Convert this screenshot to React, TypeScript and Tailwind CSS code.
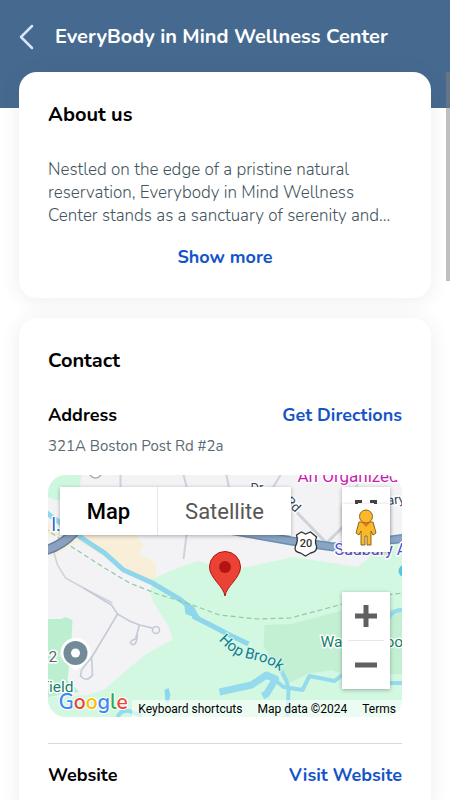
import type { ReactNode } from "react";

function Card({ title, children }: { title: string; children: ReactNode }) {
  return (
    <section className="rounded-[18px] bg-white px-[29px] pt-7 pb-6 shadow-[0_2px_20px_rgba(40,50,90,0.09)]">
      <h2 className="text-xl leading-[30px] font-bold text-black">{title}</h2>
      {children}
    </section>
  );
}

function MapDrawing() {
  return (
    <svg
      viewBox="0 0 355 242"
      preserveAspectRatio="xMidYMid slice"
      className="absolute inset-0 h-full w-full"
      fontFamily="Roboto, sans-serif"
      aria-hidden="true"
    >
      <rect width="355" height="242" fill="#f3f2f4" />
      <path d="M0 0H34L31 19L22 29L0 22Z" fill="#cef7df" />
      <path d="M0 77L23 59L87 59L96 70L91 78L108 88L109 101L105 107L72 91L30 66L5 82Z" fill="#f9eed8" />
      <path d="M0 46V60L18 61Z" fill="#f9eed8" />
      <path
        d="M105 104L125 95L150 86L176 93L200 92L246 82L310 92L334 73L355 65V242H0V222L40 220L56 215L85 190L100 178L125 165L121 151L105 126L103 115Z"
        fill="#d2f8e1"
      />
      <path d="M0 144L14 144L18 142L25 145L24 165L20 205L32 217L0 222Z" fill="#bcefd0" />
      <path d="M217 150L244 149L274 141L300 134H355V199H295L284 195L260 199L242 208L230 196L216 170Z" fill="#c3f0d3" />
      <g fill="none" stroke="#cdd3da" strokeWidth="2">
        <path d="M73 0V22M136 0L140 15L139 60L136 84M179 0L183 20M233 0L218 25M310 9L304 24" />
        <path d="M248 36L279 68L320 28" strokeWidth="3" />
        <path d="M6 76L10 90L18 103L36 113L65 128" strokeWidth="1.5" />
      </g>
      <g fill="none" stroke="#c4cbd8" strokeWidth="1.6">
        <path d="M36 113L64 130L70 139L82 146L92 150L105 153M70 139L60 156L45 181L34 195L33 201Q39 208 45 200L44 181M92 150L88 164Q82 166 83 168Q87 172 89 166L90 160" />
        <circle cx="108.500" cy="155" r="3.500" />
      </g>
      <circle cx="48" cy="-3" r="6" fill="#fff" stroke="#a9adb2" strokeWidth="1.5" />
      <path d="M-2 37L28 59L57 78L76 95L105 108L132 124L145 134L147 142L165 151L180 159L201 169" fill="none" stroke="#8ed6ec" strokeWidth="5" />
      <path d="M136 127L146 132L151 140L159 150L149 143L138 139L137 132Z" fill="#8ed6ec" />
      <g fill="none" stroke="#96dbed" strokeWidth="4" strokeLinejoin="round">
        <path d="M234 196L239 206L241 214L240 242M217 202L225 203L236 212L255 215L262 201L287 206L296 199L310 193M336 156Q341 134 355 135M342 208H355M70 242Q75 232 87 238L94 241" />
        <path d="M172 217L204 210L219 200L228 204L219 219L215 221" strokeWidth="7" />
      </g>
      <path d="M118 227L117 215L121 213L123 220L121 228Z" fill="#8ed6ec" />
      <path d="M-3 53L23 71L57 93L82 108L110 119L145 130L172 140L210 144L243 143L288 131L320 122L355 118" fill="none" stroke="#8fc9a6" strokeWidth="1.2" strokeDasharray="5 3" />
      <path d="M-5 76Q13 72 27 57" fill="none" stroke="#657f9f" strokeWidth="10" />
      <path d="M-5 76Q13 72 27 57" fill="none" stroke="#8aa1bf" strokeWidth="7" />
      <path d="M170 53L210 60L244 66L286 72L320 68L358 63" fill="none" stroke="#6f8daf" strokeWidth="9" />
      <path d="M170 53L210 60L244 66L286 72L320 68L358 63" fill="none" stroke="#88a5c5" strokeWidth="6" />
      <path d="M249 60L254 57L258 59L263 57L269 62Q267 67 269 71Q270 77 263 78L258 81L253 78Q246 77 248 71Q251 66 249 60Z" fill="#fff" stroke="#333" strokeWidth="1.300" />
      <text x="258.500" y="72" textAnchor="middle" fontSize="11" fontWeight="500" fill="#333">20</text>
      <circle cx="357" cy="96" r="6" fill="#55c4e5" />
      <g fontSize="15.500" stroke="#fff" strokeWidth="3" strokeLinejoin="round" paintOrder="stroke">
        <text x="250" y="7" fontSize="17" fill="#c81eb0">An Organized</text>
        <text x="203" y="17" fontSize="13" fill="#30435f">Dr</text>
        <text x="237" y="27" fontSize="13" fill="#30435f" transform="rotate(45 237 27)">Rd</text>
        <text x="340" y="30" fontSize="13" fill="#30435f" transform="rotate(-6 340 30)">ary</text>
        <text x="287" y="80" fontSize="16" fill="#5452cb">Sudbury A</text>
        <text x="273" y="172" fill="#148167">Wa</text>
        <text x="338" y="172" fill="#148167">oo</text>
        <text x="1" y="187" fill="#566675">2</text>
        <text x="-7" y="217" fill="#148167">Field</text>
        <text x="4" y="56" fontSize="18" fill="#1769cf">l.</text>
      </g>
      <path id="brook" d="M171 165Q180 175 191 181Q202 184 212 186Q224 189 240 202" fill="none" />
      <text fontSize="15" fill="#137b98" stroke="#d2f8e1" strokeWidth="2" paintOrder="stroke">
        <textPath href="#brook">Hop Brook</textPath>
      </text>
      <path d="M28 196L17 187Q12 181 13 178A15 15 0 0 1 43 178Q43 183 39 187Z" fill="#fff" />
      <circle cx="28" cy="178" r="12" fill="#738b99" />
      <circle cx="28" cy="178" r="4.500" fill="#fff" />
      <path d="M177.500 121C176 111 162 103 162 92A15.500 15.500 0 0 1 193 92C193 103 179 111 177.500 121Z" fill="#ea4335" stroke="#b31412" />
      <circle cx="177.500" cy="92" r="6" fill="#b31412" />
      <text x="11" y="234" fontSize="21" fontFamily="Nunito, Lato, sans-serif" fontWeight="600" stroke="#fff" strokeWidth="2" paintOrder="stroke">
        <tspan fill="#4285f4">G</tspan><tspan fill="#ea4335">o</tspan><tspan fill="#fbbc05">o</tspan><tspan fill="#4285f4">g</tspan><tspan fill="#34a853">l</tspan><tspan fill="#ea4335">e</tspan>
      </text>
    </svg>
  );
}

function Pegman() {
  return (
    <svg viewBox="0 0 22 38" className="h-[38px] w-[22px]" aria-hidden="true">
      <path d="M4 13H18L21 24L18 26L16 22V36H12V27H10V36H6V22L4 26L1 24Z" fill="#fbb829" stroke="#8b651c" strokeLinejoin="round" />
      <path d="M6 13H16L11 18Z" fill="#e37d24" />
      <circle cx="11" cy="7.500" r="6.500" fill="#fbb829" stroke="#8b651c" />
    </svg>
  );
}

function LocationMap() {
  return (
    <div className="relative h-[242px] overflow-hidden rounded-[18px]" aria-label="Map">
      <MapDrawing />
      <div className="absolute top-3 left-3 flex h-12 bg-white font-[Roboto,sans-serif] text-[22px] text-black shadow-[0_1px_4px_rgba(0,0,0,0.3)]">
        <button className="w-[98px] border-r border-gray-200 font-medium">Map</button>
        <button className="w-[133px] text-[#565656]">Satellite</button>
      </div>
      <button aria-label="Toggle fullscreen" className="absolute top-3 right-3 flex h-12 w-12 items-center justify-center bg-white shadow-[0_1px_4px_rgba(0,0,0,0.3)]">
        <svg viewBox="0 0 22 22" className="h-[22px] w-[22px]" fill="none" stroke="#444" strokeWidth="3" aria-hidden="true">
          <path d="M1.500 7V1.500H7M15 1.500H20.500V7M20.500 15V20.500H15M7 20.500H1.500V15" />
        </svg>
      </button>
      <button aria-label="Street View" className="absolute top-[29px] right-3 flex h-12 w-12 items-center justify-center bg-white shadow-[0_1px_4px_rgba(0,0,0,0.25)]">
        <Pegman />
      </button>
      <div className="absolute right-3 bottom-7 flex h-[97px] w-12 flex-col bg-white shadow-[0_1px_4px_rgba(0,0,0,0.3)]">
        <button aria-label="Zoom in" className="flex flex-1 items-center justify-center">
          <svg viewBox="0 0 22 22" className="h-[22px] w-[22px]" stroke="#606060" strokeWidth="5" aria-hidden="true"><path d="M0 11H22M11 0V22" /></svg>
        </button>
        <div className="mx-1.5 h-px bg-gray-200" />
        <button aria-label="Zoom out" className="flex flex-1 items-center justify-center">
          <svg viewBox="0 0 22 22" className="h-[22px] w-[22px]" stroke="#606060" strokeWidth="5" aria-hidden="true"><path d="M0 11H22" /></svg>
        </button>
      </div>
      <div className="absolute right-0 bottom-0 flex h-[17px] items-center gap-[15px] bg-white/60 pr-1.5 pl-1.5 font-[Roboto,sans-serif] text-xs text-black">
        <button>Keyboard shortcuts</button>
        <span>Map data ©2024</span>
        <a href="#terms">Terms</a>
      </div>
    </div>
  );
}

export default function App() {
  return (
    <div className="relative h-screen overflow-hidden bg-white font-[Nunito,Lato,sans-serif]">
      <header className="flex h-[108px] items-start gap-[21px] bg-[#466a8f] px-[19px] pt-[22px] text-white">
        <button aria-label="Back" className="flex h-[30px] items-center">
          <svg viewBox="0 0 15 26" className="h-[26px] w-[15px]" fill="none" stroke="#d5e5fa" strokeWidth="2.500" strokeLinecap="round" strokeLinejoin="round" aria-hidden="true">
            <path d="M13 2L2 13L13 24" />
          </svg>
        </button>
        <h1 className="text-xl leading-[30px] font-bold whitespace-nowrap">EveryBody in Mind Wellness Center</h1>
      </header>
      <main className="-mt-9 flex flex-col gap-5 px-[19px]">
        <Card title="About us">
          <p className="mt-7 text-[17px] leading-[23px] font-light text-[#44545d]">
            Nestled on the edge of a pristine natural reservation, Everybody in Mind Wellness Center stands as a
            sanctuary of serenity and...
          </p>
          <button className="mt-[15px] mb-0.5 block w-full text-lg leading-[30px] font-bold text-[#1554c8]">Show more</button>
        </Card>
        <Card title="Contact">
          <div className="mt-6 flex items-center justify-between text-lg leading-[30px] font-bold">
            <h3>Address</h3>
            <a href="#directions" className="text-[#1554c8]">Get Directions</a>
          </div>
          <p className="mt-1.5 mb-[19px] text-[15px] leading-5 text-[#5c6b73]">321A Boston Post Rd #2a</p>
          <LocationMap />
          <hr className="mt-[26px] mb-4 border-[#d5dada]" />
          <div className="flex items-center justify-between text-lg leading-[30px] font-bold">
            <h3>Website</h3>
            <a href="#website" className="text-[#1554c8]">Visit Website</a>
          </div>
        </Card>
      </main>
      <div className="absolute top-[72px] right-0 h-[209px] w-1 bg-[#808080]/50" />
    </div>
  );
}
